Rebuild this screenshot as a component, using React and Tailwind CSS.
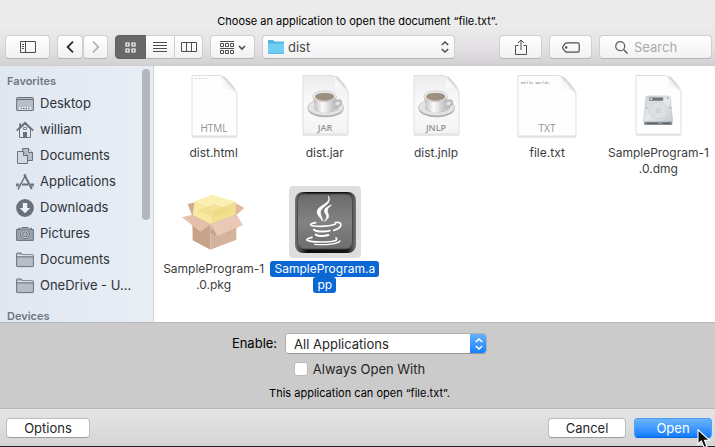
import React from 'react';

const FONT = "font-['Inter','Liberation_Sans',sans-serif]";
const BUTTON =
  'flex h-6 items-center justify-center rounded border border-[#d0ced0] border-b-[#b5b3b5] bg-linear-to-b from-white to-[#f1f1f1] text-[#4a4a4a]';

/* ---------- toolbar glyphs ---------- */

function SidebarGlyph() {
  return (
    <svg width="16" height="12" viewBox="0 0 16 12" fill="none" stroke="#4d4d4d">
      <path d="M.5.5h15v11H.5zM5.5.5v11M2 3.5h2M2 5.5h2M2 7.5h2" />
    </svg>
  );
}

function Chevron({ flip, color }) {
  return (
    <svg width="8" height="12" viewBox="0 0 8 12" fill="none" stroke={color} strokeWidth="1.8">
      <path d={flip ? 'M1 .7L6.4 6L1 11.3' : 'M7 .7L1.6 6L7 11.3'} />
    </svg>
  );
}

function GridGlyph() {
  return (
    <svg width="11" height="11" viewBox="0 0 11 11" fill="none" stroke="#fff" strokeWidth="1.2">
      <path d="M1 1h3v3H1zM7 1h3v3H7zM1 7h3v3H1zM7 7h3v3H7z" />
    </svg>
  );
}

function ListGlyph() {
  return (
    <svg width="14" height="11" viewBox="0 0 14 11" stroke="#4d4d4d">
      <path d="M0 .5h14M0 3.5h14M0 6.5h14M0 9.5h14" />
    </svg>
  );
}

function ColumnsGlyph() {
  return (
    <svg width="16" height="10" viewBox="0 0 16 10" fill="none" stroke="#4d4d4d">
      <path d="M.5.5h15v9H.5zM5.5.5v9M10.5.5v9" />
    </svg>
  );
}

function ArrangeGlyph() {
  return (
    <svg width="26" height="13" viewBox="0 0 26 13" fill="none" stroke="#4d4d4d">
      <path d="M0 .5h14M.5 2.5h3v3h-3zM5.5 2.5h3v3h-3zM10.5 2.5h3v3h-3zM0 7.5h14M.5 9.5h3v3h-3zM5.5 9.5h3v3h-3zM10.5 9.5h3v3h-3z" />
      <path d="M19 5l3 3l3-3" strokeWidth="1.6" />
    </svg>
  );
}

function ShareGlyph() {
  return (
    <svg width="12" height="16" viewBox="0 0 12 16" fill="none" stroke="#4d4d4d">
      <path d="M3.5 6.5H.5v9h11v-9h-3M6 11V1M3 4l3-3l3 3" />
    </svg>
  );
}

function TagGlyph() {
  return (
    <svg width="18" height="11" viewBox="0 0 18 11" fill="none" stroke="#4d4d4d" strokeWidth="1.2">
      <path d="M5 .8h10.6q1.6 0 1.6 1.6v6.2q0 1.6-1.6 1.6H5q-1 0-1.700-.7L.9 6.300q-.6-.8 0-1.600L3.300 1.500Q4 .8 5 .8z" />
      <circle cx="4.200" cy="5.500" r=".7" />
    </svg>
  );
}

function SearchGlyph() {
  return (
    <svg width="13" height="13" viewBox="0 0 13 13" fill="none" stroke="#5c5c5c" strokeWidth="1.2">
      <circle cx="5.200" cy="5.200" r="4.500" />
      <path d="M8.500 8.500l4 4" strokeWidth="1.500" />
    </svg>
  );
}

function FolderGlyph() {
  return (
    <svg width="16" height="14" viewBox="0 0 16 14">
      <path d="M0 1q0-1 1-1h4l1.500 1.500H15q1 0 1 1V13q0 1-1 1H1q-1 0-1-1z" fill="#4fb4df" />
      <path d="M0 3.500h16V12.500q0 .8-1 .8H1q-1 0-1-.8z" fill="#6fcdf3" />
    </svg>
  );
}

function UpDown({ color, width = 1.5 }) {
  return (
    <svg width="8" height="12" viewBox="0 0 8 12" fill="none" stroke={color} strokeWidth={width}>
      <path d="M.8 4L4 1l3.200 3M.8 8L4 11l3.200-3" />
    </svg>
  );
}

/* ---------- sidebar glyphs ---------- */

const S = '#69717b';
const F = '#b6bdc8';

const PLACE_ICONS = {
  desktop: (
    <>
      <path d="M.6 3.500q0-1 1-1h14.800q1 0 1 1v11.400q0 .6-.6.6H1.200q-.6 0-.6-.6z" fill={F} stroke={S} />
      <path d="M1 4.500h16" stroke={S} />
      <path d="M3 12h12v3H3z" fill="#e8edf4" />
      <path d="M4.500 13.500h1.500M7 13.500h1.500M9.500 13.500H11M12 13.500h1.500" stroke={S} strokeWidth="1.500" />
    </>
  ),
  home: (
    <>
      <path d="M3.500 8v8.500h11V8L9 3z" fill="#e4e9f1" stroke={S} />
      <path d="M.7 9.600L9 1.700l8.300 7.900" fill="none" stroke={S} strokeWidth="1.700" />
      <path d="M3.200 2.500h2v3l-2 1.800z" fill={S} />
      <path d="M7 11h4v6H7z" fill={S} />
      <path d="M7.500 6.500h3v2h-3z" fill="none" stroke={S} strokeWidth=".8" />
    </>
  ),
  documents: (
    <>
      <path d="M6.500 1.500h6l4 4v8h-10z" fill={F} stroke={S} />
      <path d="M12.500 1.500v4h4" fill="#e4e9f1" stroke={S} />
      <path d="M1.500 4.500h6l4 4v8h-10z" fill="#d3d9e2" stroke={S} />
      <path d="M7.500 4.500v4h4" fill={F} stroke={S} />
    </>
  ),
  applications: (
    <g fill="none" stroke={S}>
      <path d="M8.200 1.500L15.800 16" strokeWidth="2" />
      <path d="M9.800 1.500L2 16.500" strokeWidth="1.500" />
      <path d="M0 11.500h3.500M6 11.500h6M14.500 11.500H18" strokeWidth="1.800" />
      <path d="M0 13h3M15 13h3" />
    </g>
  ),
  downloads: (
    <>
      <circle cx="9" cy="9" r="8.900" fill={S} />
      <path d="M6.800 4h4.400v5h3L9 14.300L3.800 9h3z" fill="#eef2f7" />
    </>
  ),
  pictures: (
    <>
      <path d="M.6 4.500h4l1.400-2h6l1.400 2h4v10.900H.6z" fill="#9aa2ad" stroke={S} />
      <path d="M2 3.300h2.500M14 3.300h2" stroke={S} />
      <circle cx="9" cy="9.300" r="4.400" fill="#c7cdd6" stroke={S} />
      <circle cx="9" cy="9.300" r="2.500" fill="#aab1bc" stroke={S} />
    </>
  ),
  folder: (
    <>
      <path d="M.6 15V2.600q0-.6.6-.6h4l1.600 1.800h10q.6 0 .6.600V15q0 .6-.6.6H1.200q-.6 0-.6-.6z" fill={F} stroke={S} />
      <path d="M1.100 4.700h15.800" stroke="#e6ebf2" />
      <path d="M1 5.900h16" stroke={S} />
    </>
  ),
};

const PLACES = [
  ['Desktop', 'desktop'],
  ['william', 'home'],
  ['Documents', 'documents'],
  ['Applications', 'applications'],
  ['Downloads', 'downloads'],
  ['Pictures', 'pictures'],
  ['Documents', 'folder'],
  ['OneDrive - U...', 'folder'],
];

/* ---------- file icons, drawn in a 72 x 72 box ---------- */

function Sheet({ x = 14, w = 45, h = 60, curl = 16, gray }) {
  const r = x + w;
  const b = 5 + h;
  return (
    <>
      <defs>
        <linearGradient id="page" x1="0" y1="0" x2="0" y2="1">
          <stop offset="0" stopColor="#ececec" />
          <stop offset=".5" stopColor="#fafafa" />
          <stop offset="1" stopColor="#f4f4f4" />
        </linearGradient>
        <linearGradient id="fold" x1="0" y1="1" x2="1" y2="0">
          <stop offset="0" stopColor="#fff" />
          <stop offset=".45" stopColor="#f6f6f6" />
          <stop offset=".6" stopColor="#cfcfcf" />
        </linearGradient>
      </defs>
      <path d={`M${x} ${b + 1}H${r}`} stroke="#d2d2d2" />
      <path
        d={`M${x} 5.500H${r - curl - 2}Q${r - curl + 4} 6 ${r - 6} ${curl - 2}Q${r} ${curl + 4} ${r} ${curl + 9}V${b}H${x}z`}
        fill={gray ? 'url(#page)' : '#fefefe'}
        stroke="#dedede"
      />
      <path
        d={`M${r - curl} 6Q${r - curl + 2} 12 ${r - curl + 1} ${curl + 4}Q${r - 6} ${curl + 2} ${r - 1} ${curl + 7}Q${r - 3} ${curl} ${r - 8} ${curl - 4}Q${r - curl + 5} 6 ${r - curl} 6z`}
        fill="url(#fold)"
      />
    </>
  );
}

function Kind({ x, y = 62, size = 10, weight = 400, children }) {
  return (
    <text x={x} y={y} textAnchor="middle" fontSize={size} fill="#929292" fontFamily="Open Sans, sans-serif" fontWeight={weight}>
      {children}
    </text>
  );
}

function Cup() {
  return (
    <g transform="translate(-134 -5) scale(.3333)">
      <defs>
        <linearGradient id="bowl" x1="0" y1="0" x2="1" y2="0">
          <stop offset="0" stopColor="#bdbdbd" />
          <stop offset=".4" stopColor="#fafafa" />
          <stop offset="1" stopColor="#b5b5b5" />
        </linearGradient>
      </defs>
      <ellipse cx="512" cy="131" rx="54" ry="26" fill="#adadad" />
      <ellipse cx="512" cy="127" rx="54" ry="25" fill="#e4e4e4" stroke="#bcbcbc" strokeWidth="2" />
      <ellipse cx="514" cy="128" rx="38" ry="15" fill="#c9c9c9" />
      <path d="M540 109C558 100 566 113 552 123C547 127 540 128 532 127" fill="none" stroke="#b9b9b9" strokeWidth="6" />
      <path d="M475 94C475 122 486 143 509 143C533 143 544 122 544 94z" fill="url(#bowl)" />
      <ellipse cx="509" cy="94" rx="35" ry="16" fill="#f4f4f4" stroke="#b8b8b8" strokeWidth="2" />
      <ellipse cx="509" cy="95" rx="29" ry="12" fill="#9d9080" />
      <path d="M484 99Q509 114 534 99Q525 107 509 107Q493 107 484 99z" fill="#b8ac9c" />
    </g>
  );
}

function Drive() {
  return (
    <g transform="translate(-243 -5) scale(.3333)">
      <defs>
        <linearGradient id="metal" x1="0" y1="0" x2="1" y2="1">
          <stop offset="0" stopColor="#cfd3d6" />
          <stop offset=".5" stopColor="#e6e9eb" />
          <stop offset="1" stopColor="#c4c9cc" />
        </linearGradient>
      </defs>
      <path d="M795 168H880V177Q880 180 877 180H798Q795 180 795 177z" fill="#8b9094" />
      <path d="M806 93H869Q873 93 874 97L881 166Q881 170 877 170H798Q794 170 794 166L801 97Q802 93 806 93z" fill="url(#metal)" stroke="#b7bcc0" strokeWidth="1.500" />
      <ellipse cx="838" cy="136" rx="28" ry="25" fill="#dce0e3" stroke="#c6cbcf" strokeWidth="2" />
      <circle cx="838" cy="137" r="7" fill="#d2d6d9" stroke="#c0c5c9" strokeWidth="1.500" />
      <path d="M811 97h42v11h-43z" fill="#8d9295" />
      <path d="M822 102h28" stroke="#5f6467" strokeWidth="4" />
      <path d="M814 102h5" stroke="#e8e8e8" strokeWidth="5" />
      <circle cx="866" cy="99" r="2" fill="#777" />
      <circle cx="803" cy="128" r="2" fill="#888" />
      <circle cx="873" cy="128" r="2" fill="#888" />
      <path d="M803 175h34M850 175h24" stroke="#4f5356" strokeWidth="3" />
    </g>
  );
}

function Package() {
  return (
    <g transform="translate(-22.700 -6) scale(.3333)">
      <path d="M97 72L122 66L150 90L110 106z" fill="#d3ab90" />
      <path d="M238 68L267 83L240 108L222 92z" fill="#dfb99f" />
      <path d="M111 104L165 130V209L112 181z" fill="#c8a38b" />
      <path d="M165 130L243 102V179L165 209z" fill="#d5b29c" />
      <path d="M165 150L243 128V146L184 169L165 158z" fill="#bd967e" opacity=".6" />
      <path d="M118 64L172 45L241 66L240 103L166 133L113 105z" fill="#f6e79f" />
      <path d="M118 64L172 45L241 66L174 92z" fill="#fbf0b4" />
      <path d="M174 92L241 66L240 103L166 133z" fill="#f3e08e" />
      <path d="M118 64L174 92L166 133L113 105z" fill="#f8e9a2" />
      <path d="M126 92L176 72L228 92L170 112z" fill="#ecd67c" opacity=".5" />
      <path d="M111 104L80 112L136 155L166 132z" fill="#e4c1ab" />
      <path d="M166 132L243 103L263 136L186 169z" fill="#e9c9b5" />
    </g>
  );
}

function JavaApp() {
  return (
    <>
      <defs>
        <linearGradient id="tile" x1="0" y1="0" x2="0" y2="1">
          <stop offset="0" stopColor="#6a6a6a" />
          <stop offset=".5" stopColor="#828282" />
          <stop offset="1" stopColor="#6d6d6d" />
        </linearGradient>
        <linearGradient id="rim" x1="0" y1="0" x2="1" y2="0">
          <stop offset="0" stopColor="#777" />
          <stop offset=".2" stopColor="#0c0c0c" />
          <stop offset=".85" stopColor="#161616" />
          <stop offset="1" stopColor="#777" />
        </linearGradient>
      </defs>
      <rect x="6" y="6" width="61" height="61" rx="8" fill="url(#rim)" />
      <rect x="8.500" y="8" width="55" height="55" rx="6.500" fill="url(#tile)" stroke="#4a4a4a" />
      <g transform="translate(-9 -6) scale(.3333)" fill="none" stroke="#fff" strokeLinecap="round">
        <path d="M146 50C157 72 107 76 112 99C114 110 125 114 127 123C127 108 117 102 122 92C128 78 156 72 146 50z" fill="#fff" strokeWidth="2.500" />
        <path d="M153 76C134 82 130 92 137 101C143 109 140 117 133 124C152 112 145 105 142 97C140 89 144 83 153 76z" fill="#fff" strokeWidth="2.500" />
        <path d="M107 128C84 132 86 139 122 139C142 139 157 136 166 132" strokeWidth="5" />
        <path d="M166 128C189 122 189 144 161 151" strokeWidth="5" />
        <path d="M102 149C110 156 135 156 149 152" strokeWidth="6" />
        <path d="M107 164C115 170 134 169 145 165" strokeWidth="6" />
        <path d="M96 172C65 179 84 186 122 186C158 186 177 182 168 174" strokeWidth="5" />
        <path d="M104 193C140 196 173 192 180 183" strokeWidth="4" />
      </g>
    </>
  );
}

const FILES = [
  { lines: ['dist.html'], art: <><Sheet h={61} /><path d="M16 8.500h14" stroke="#ddd" strokeDasharray="3 1" /><Kind x={36}>HTML</Kind></> },
  { lines: ['dist.jar'], art: <><Sheet h={59} curl={14} gray /><Cup /><Kind x={36} y={61} size={9} weight={600}>JAR</Kind></> },
  { lines: ['dist.jnlp'], art: <><Sheet h={59} curl={14} gray /><Cup /><Kind x={36} y={61} size={9} weight={600}>JNLP</Kind></> },
  {
    lines: ['file.txt'],
    art: (
      <>
        <Sheet x={7} w={58} h={61} />
        <text x="10" y="14" fontSize="4" fill="#777" fontFamily="Liberation Mono, monospace">Hello world!</text>
        <Kind x={36}>TXT</Kind>
      </>
    ),
  },
  { lines: ['SampleProgram-1', '.0.dmg'], art: <><Sheet h={59} curl={14} /><Drive /></> },
  { lines: ['SampleProgram-1', '.0.pkg'], art: <Package /> },
  { lines: ['SampleProgram.a', 'pp'], art: <JavaApp />, selected: true },
];

function FileItem({ file }) {
  return (
    <li className="flex h-[116px] flex-col items-center" aria-selected={file.selected}>
      <svg width="72" height="72" viewBox="0 0 72 72" className={file.selected ? 'rounded bg-[#dedede]' : ''}>
        {file.art}
      </svg>
      <div className="mt-[3px] flex flex-col items-center">
        {file.lines.map((line) => (
          <span
            key={line}
            className={
              file.selected
                ? 'rounded-[3px] bg-[#0a67d3] px-1 text-xs leading-4 whitespace-nowrap text-white'
                : 'px-1 text-xs leading-4 whitespace-nowrap text-[#3c3c3c]'
            }
          >
            {line}
          </span>
        ))}
      </div>
    </li>
  );
}

function Toolbar() {
  return (
    <div className="flex items-center gap-[7px] border-b border-[#cfcdcf] bg-linear-to-b from-[#ebebeb] via-[#e5e2e5] to-[#d3d1d3] pt-[7px] pr-[3px] pb-1.5 pl-[5px]">
      <button aria-label="Toggle sidebar" className={`${BUTTON} w-[45px]`}><SidebarGlyph /></button>
      <div className="flex">
        <button aria-label="Back" className={`${BUTTON} w-[26px]`}><Chevron color="#2e2e2e" /></button>
        <button aria-label="Forward" className={`${BUTTON} w-[25px]`}><Chevron flip color="#b5b5b5" /></button>
      </div>
      <div className="flex">
        <button aria-label="Icon view" className="flex h-6 w-[31px] items-center justify-center rounded-l border border-[#606060] bg-[#686868]"><GridGlyph /></button>
        <button aria-label="List view" className="flex h-6 w-7 items-center justify-center border-y border-[#d0ced0] border-b-[#b5b3b5] bg-linear-to-b from-white to-[#f1f1f1]"><ListGlyph /></button>
        <button aria-label="Column view" className="flex h-6 w-[29px] items-center justify-center rounded-r border border-[#d0ced0] border-b-[#b5b3b5] bg-linear-to-b from-white to-[#f1f1f1]"><ColumnsGlyph /></button>
      </div>
      <button aria-label="Arrange" className={`${BUTTON} w-[45px]`}><ArrangeGlyph /></button>
      <label className={`${BUTTON} w-[193px] gap-1 px-[5px]`}>
        <FolderGlyph />
        <select aria-label="Folder" className="min-w-0 flex-1 appearance-none bg-transparent text-[13px] leading-4 text-[#4a4a4a] outline-none">
          <option>dist</option>
        </select>
        <UpDown color="#4d4d4d" />
      </label>
      <div className="ml-auto flex gap-[7px]">
        <button aria-label="Share" className={`${BUTTON} w-[43px]`}><ShareGlyph /></button>
        <button aria-label="Tags" className={`${BUTTON} w-[43px]`}><TagGlyph /></button>
        <label className={`${BUTTON} w-[113px] gap-1.5 pr-1 pl-[15px]`}>
          <SearchGlyph />
          <input type="search" aria-label="Search" placeholder="Search" className="min-w-0 flex-1 bg-transparent text-[13px] leading-4 outline-none placeholder:text-[#a9a9a9]" />
        </label>
      </div>
    </div>
  );
}

function Sidebar() {
  return (
    <nav className="flex w-[154px] shrink-0 justify-between overflow-hidden border-r border-[#cfd4da] bg-linear-to-r from-[#dfe7f1] to-[#e9eef5]">
      <div className="pt-1.5">
        <h2 className="mb-px pl-[7px] text-[11px] leading-[18px] font-semibold text-[#6e767f]">Favorites</h2>
        <ul className="pl-4">
          {PLACES.map(([name, icon], i) => (
            <li key={i}>
              <a href="#" className="flex h-[26px] items-center gap-1.5 text-[13px] whitespace-nowrap text-[#2f3338]">
                <svg width="18" height="18" viewBox="0 0 18 18">{PLACE_ICONS[icon]}</svg>
                {name}
              </a>
            </li>
          ))}
        </ul>
        <h2 className="mt-3 pl-[7px] text-[11px] leading-[11px] font-semibold text-[#6e767f]">Devices</h2>
      </div>
      <div className="mt-[3px] mr-[3px] h-[151px] w-2 rounded-full bg-[#b3b6ba]" />
    </nav>
  );
}

export default function App() {
  return (
    <div className={`${FONT} relative border-b border-[#1c2533] bg-[#ebebeb]`}>
      <h1 className="pt-3.5 text-center text-[11px] leading-[14px] text-black">
        Choose an application to open the document “file.txt”.
      </h1>
      <Toolbar />
      <div className="flex h-64">
        <Sidebar />
        <ul className="grid flex-1 grid-cols-5 content-start overflow-hidden bg-white pt-1 pr-px pl-1">
          {FILES.map((file, i) => (
            <FileItem key={i} file={file} />
          ))}
        </ul>
      </div>
      <div className="flex flex-col items-center border-t border-[#b7b7b7] bg-[#cbcbcb] pt-2.5 pb-2 pl-1 text-black">
        <div className="flex items-center gap-2">
          <label htmlFor="enable" className="pb-0.5 text-[13px] leading-4">Enable:</label>
          <div className="flex h-[21px] w-[202px] overflow-hidden rounded border border-[#b0b0b0] border-b-[#979797] bg-white">
            <select id="enable" className="min-w-0 flex-1 appearance-none bg-white pl-2 text-[13px] leading-4 text-[#262626] outline-none">
              <option>All Applications</option>
            </select>
            <span className="-my-px -mr-px flex w-[17px] items-center justify-center bg-linear-to-b from-[#68b3fa] to-[#0a7bff]">
              <UpDown color="#fff" width={1.6} />
            </span>
          </div>
        </div>
        <label className="mt-[7px] flex h-4 items-center gap-[5px] text-[13px] leading-4 text-[#262626]">
          <input type="checkbox" className="size-3.5 appearance-none rounded-[3px] border border-[#bababa] bg-white" />
          Always Open With
        </label>
        <p className="mt-[9px] text-[11px] leading-[14px]">This application can open “file.txt”.</p>
      </div>
      <div className="flex gap-2 border-t border-[#b9b9b9] bg-linear-to-b from-[#e5e5e5] to-[#d5d5d5] pt-[9px] pr-[3px] pb-2 pl-1.5 text-[13px] leading-4">
        <button className="mr-auto h-5 w-[84px] rounded border border-[#bdbdbd] border-b-[#9b9b9b] bg-white text-[#262626]">Options</button>
        <button className="h-5 w-[78px] rounded border border-[#bdbdbd] border-b-[#9b9b9b] bg-white text-[#262626]">Cancel</button>
        <button className="h-5 w-[78px] rounded border border-[#4a9ff5] border-b-[#0967e6] bg-linear-to-b from-[#6ab5fa] to-[#0a7bff] text-white">Open</button>
      </div>
      <svg className="absolute right-1 -bottom-px" width="14" height="18" viewBox="0 0 14 18">
        <path d="M1 .8V15l3.300-3.100L7 18h3L7.500 11.300H12.500z" fill="#0b0b0b" stroke="#fff" strokeWidth="1.100" />
      </svg>
    </div>
  );
}
